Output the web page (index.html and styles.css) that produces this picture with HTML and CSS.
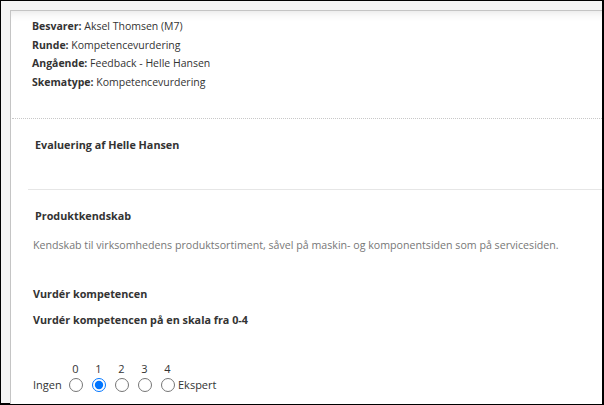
FILE: index.html
```html
<!DOCTYPE html>
<html lang="da">
<head>
<meta charset="utf-8">
<link rel="stylesheet" href="styles.css">
</head>
<body>
<div class="frame">
  <div class="panel">
    <div class="info">
      <div class="info-row"><b>Besvarer:</b> Aksel Thomsen (M7)</div>
      <div class="info-row"><b>Runde:</b> Kompetencevurdering</div>
      <div class="info-row"><b>Angående:</b> Feedback - Helle Hansen</div>
      <div class="info-row"><b>Skematype:</b> Kompetencevurdering</div>
    </div>
    <div class="dotted"></div>
    <div class="eval-title">Evaluering af Helle Hansen</div>
    <div class="solid"></div>
    <div class="question">
      <div class="q-title">Produktkendskab</div>
      <div class="q-desc">Kendskab til virksomhedens produktsortiment, såvel på maskin- og komponentsiden som på servicesiden.</div>
      <div class="q-label">Vurdér kompetencen</div>
      <div class="q-label q-sub">Vurdér kompetencen på en skala fra 0-4</div>
      <div class="scale">
        <div class="scale-end end-left">Ingen</div>
        <label class="opt"><span class="num">0</span><input type="radio" name="r"></label>
        <label class="opt"><span class="num">1</span><input type="radio" name="r" checked></label>
        <label class="opt"><span class="num">2</span><input type="radio" name="r"></label>
        <label class="opt"><span class="num">3</span><input type="radio" name="r"></label>
        <label class="opt"><span class="num">4</span><input type="radio" name="r"></label>
        <div class="scale-end end-right">Ekspert</div>
      </div>
    </div>
  </div>
</div>
</body>
</html>
```
FILE: styles.css
```css
html, body {
  margin: 0;
  padding: 0;
  width: 604px;
  height: 405px;
  overflow: hidden;
}
body {
  font-family: "Open Sans", "Liberation Sans", sans-serif;
  font-size: 10.5px;
  color: #333;
}
.frame {
  box-sizing: border-box;
  width: 604px;
  height: 405px;
  border: 1px solid #000;
  border-right-width: 2px;
  border-bottom-width: 2px;
  background: #f4f4f4;
  padding: 9px 0 0 9px;
}
.panel {
  height: 100%;
  background: #fff;
  border-top: 1px solid #c4c4c4;
  border-left: 1px solid #c4c4c4;
  box-shadow: inset 0 10px 10px -8px rgba(0,0,0,0.10);
}
.info {
  padding: 6px 0 0 21px;
}
.info-row {
  height: 18.7px;
  line-height: 18.7px;
}
.info-row b { font-weight: 700; }
.dotted {
  margin: 26px 0 0 1px;
  border-top: 1px dotted #c8c8c8;
}
.eval-title {
  margin: 18px 0 0 24px;
  font-weight: 700;
  font-size: 10.8px;
  line-height: 16px;
}
.solid {
  margin: 36px 0 0 17px;
  border-top: 1px solid #e6e6e6;
}
.question {
  padding-left: 22px;
}
.q-title {
  margin-top: 18px;
  margin-left: 2px;
  font-weight: 700;
  font-size: 10.8px;
  line-height: 16px;
}
.q-desc {
  margin-top: 13px;
  color: #777;
  font-size: 10.65px;
  line-height: 16px;
}
.q-label {
  margin-top: 33px;
  font-weight: 700;
  font-size: 10.8px;
  line-height: 16px;
}
.q-sub {
  margin-top: 10px;
}
.scale {
  margin-top: 34px;
  display: flex;
  align-items: flex-end;
  font-size: 11px;
}
.scale-end {
  line-height: 14px;
  padding-bottom: 0;
}
.end-left {
  width: 31px;
}
.opt {
  display: flex;
  flex-direction: column;
  align-items: center;
  width: 23px;
}
.num {
  line-height: 14px;
}
.opt input {
  margin: 2px 0 0 0;
  width: 14px;
  height: 14px;
}
.end-right {
  margin-left: -1px;
}
```
